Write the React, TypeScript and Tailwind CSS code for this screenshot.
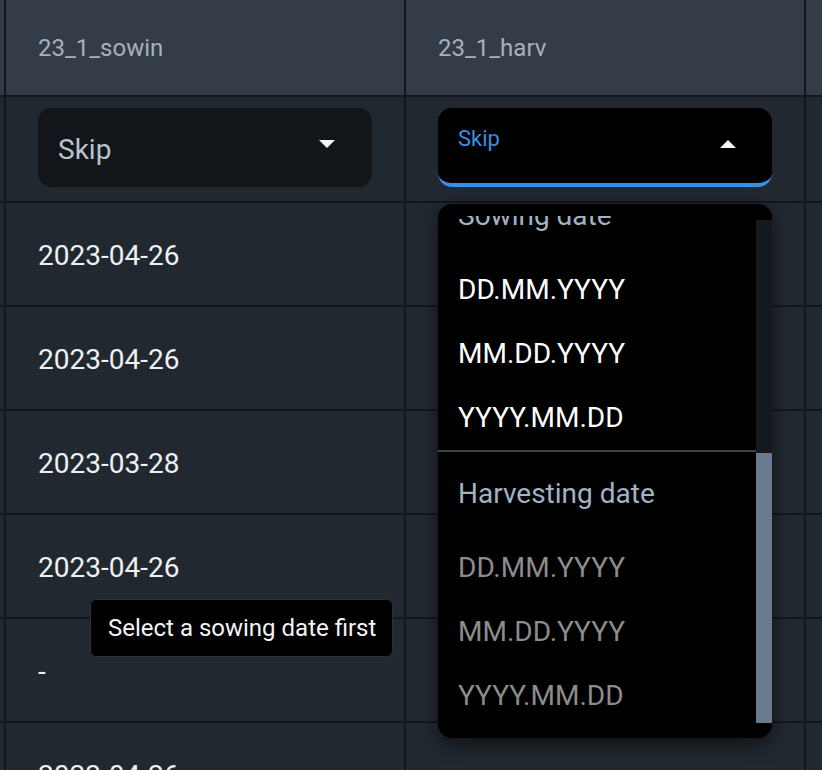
const rows = ["2023-04-26", "2023-04-26", "2023-03-28", "2023-04-26", "-", "2023-04-26"];
const formats = ["DD.MM.YYYY", "MM.DD.YYYY", "YYYY.MM.DD"];

const Caret = ({ up }: { up?: boolean }) => (
  <svg width="16" height="8" viewBox="0 0 16 8" className="shrink-0">
    {up ? <path d="M0 8 L8 0 L16 8 Z" fill="#f4f6f8" /> : <path d="M0 0 L8 8 L16 0 Z" fill="#f4f6f8" />}
  </svg>
);

const Row = ({ h, left, right, header }: { h: string; left: React.ReactNode; right?: React.ReactNode; header?: boolean }) => (
  <div className={`flex border-b-2 border-[#12171d] ${header ? "bg-[#343c47]" : ""}`}>
    <div className="w-[4px]" />
    <div className={`w-[400px] border-l-2 border-[#12171d] pl-[32px] ${h}`}>{left}</div>
    <div className={`w-[400px] border-l-2 border-[#12171d] pl-[32px] ${h}`}>{right}</div>
    <div className="flex-1 border-l-2 border-[#12171d]" />
  </div>
);

const Menu = () => (
  <div className="absolute left-0 top-[96px] z-10 h-[534px] w-[334px] overflow-hidden rounded-[14px] bg-black pt-[12px] pb-[15px] shadow-[0_6px_18px_rgba(0,0,0,0.55)]">
    <div className="flex h-full">
      <div className="flex-1 overflow-hidden">
        <div className="-mt-[42px]">
          <div className="flex h-[84px] items-center pl-[20px] text-[28px] text-[#a3b2c4]">Sowing date</div>
          {formats.map((f) => (
            <div key={"s" + f} className="flex h-[64px] items-center pl-[20px] text-[28px] text-white">{f}</div>
          ))}
          <div className="h-[2px] bg-[#3a424d]" />
          <div className="flex h-[84px] items-center pl-[20px] text-[28px] text-[#a3b2c4]">Harvesting date</div>
          {formats.map((f) => (
            <div key={"h" + f} className="flex h-[64px] items-center pl-[20px] text-[28px] text-[#8c8c8c]">{f}</div>
          ))}
        </div>
      </div>
      <div className="mt-[4px] flex w-[16px] flex-col">
        <div className="flex-1 bg-[#15181c]" />
        <div className="h-[270px] bg-[#6b7b8f]" />
      </div>
    </div>
  </div>
);

export default function App() {
  return (
    <div className="relative h-[770px] w-[822px] overflow-hidden bg-[#212830] font-['Roboto',sans-serif]">
      <Row
        header
        h="h-[95px] flex items-center"
        left={<span className="text-[24px] text-[#a6b1bf]">23_1_sowin</span>}
        right={<span className="text-[24px] text-[#a6b1bf]">23_1_harv</span>}
      />
      <Row
        h="h-[104px] pt-[11px]"
        left={
          <div className="flex h-[79px] w-[334px] items-start rounded-[14px] bg-[#121519] pl-[20px] pr-[37px]">
            <span className="mt-[28px] text-[28px] leading-none text-[#b9c3cd]">Skip</span>
            <div className="ml-auto mt-[32px]"><Caret /></div>
          </div>
        }
        right={
          <div className="relative w-[334px]">
            <div className="flex h-[79px] items-start rounded-[14px] border-b-4 border-[#3a8ee6] bg-black pl-[20px] pr-[36px]">
              <span className="mt-[20px] text-[22px] leading-none text-[#3a8ee6]">Skip</span>
              <div className="ml-auto mt-[32px]"><Caret up /></div>
            </div>
            <Menu />
          </div>
        }
      />
      {rows.map((r, i) => (
        <Row
          key={i}
          h="h-[102px] flex items-center pt-[3px]"
          left={<span className="text-[28px] text-[#eef1f4]">{r}</span>}
        />
      ))}
      <div className="absolute left-[90px] top-[599px] z-20 flex h-[58px] w-[303px] items-center rounded-[6px] border border-[#2c3139] bg-black pl-[17px] text-[24px] text-[#f2f4f6]">
        Select a sowing date first
      </div>
    </div>
  );
}
